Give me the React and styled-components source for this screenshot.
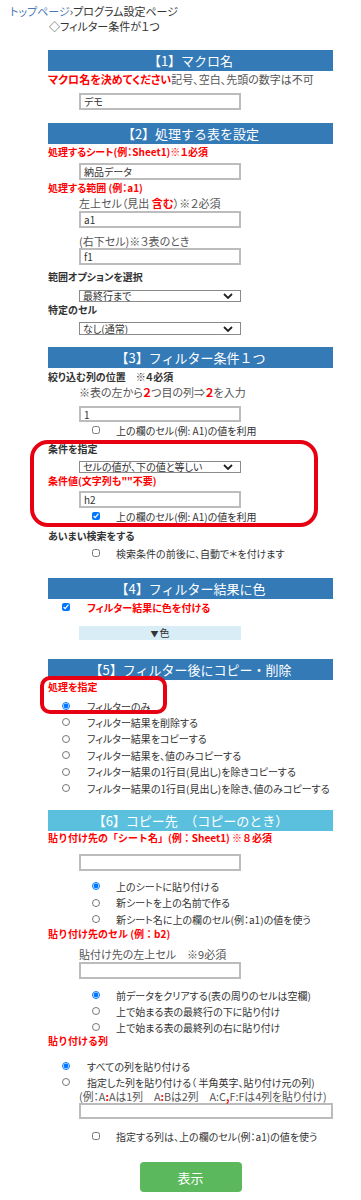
import React from "react";
import styled, { createGlobalStyle } from "styled-components";

const GlobalStyle = createGlobalStyle`
  body {
    margin: 0;
    background: #fff;
    color: #333;
    font-family: "Noto Sans CJK JP", "Noto Sans", sans-serif;
    font-feature-settings: "palt" 1;
  }
`;

const Breadcrumb = styled.div`
  padding: 4px 0 0 10px;
  font-size: 11px;
  line-height: 15px;
  color: #333;

  & a {
    color: #4a78b5;
    text-decoration: none;
  }
`;

const SubTitle = styled.div`
  padding-left: 49px;
  font-size: 11px;
  line-height: 14px;
  color: #333;
`;

const Content = styled.div`
  margin: 17px 0 0 48px;
  width: 285px;
`;

const SectionTitle = styled.div`
  margin-top: ${(p) => p.$mt || 0}px;
  height: 21px;
  line-height: 21px;
  background: ${(p) => (p.$light ? "#5bc0de" : "#337ab7")};
  color: #fff;
  font-size: 13px;
  text-align: center;
  font-feature-settings: normal;
`;

const Lead = styled.div`
  line-height: 16px;
  font-size: 11px;
  color: #555;

  & b {
    color: #ff0000;
  }
`;

const RedLabel = styled.div`
  margin-top: ${(p) => p.$mt || 0}px;
  line-height: ${(p) => p.$lh || 16}px;
  font-size: 10px;
  font-weight: bold;
  color: #ff0000;
  white-space: nowrap;
  font-feature-settings: ${(p) => (p.$fixed ? "normal" : '"palt" 1')};
`;

const FieldLabel = styled.div`
  margin-top: ${(p) => p.$mt || 0}px;
  line-height: ${(p) => p.$lh || 16}px;
  font-size: 10px;
  font-weight: bold;
  color: #333;
`;

const Hint = styled.div`
  margin-top: ${(p) => p.$mt || 0}px;
  padding-left: 31px;
  line-height: ${(p) => p.$lh || 14}px;
  font-size: ${(p) => p.$size || 11}px;
  color: #555;
  white-space: nowrap;

  & em {
    font-style: normal;
    font-weight: bold;
    color: #ff0000;
  }
`;

const TextInput = styled.input`
  display: block;
  box-sizing: border-box;
  margin: ${(p) => p.$mt || 0}px 0 0 31px;
  width: ${(p) => (p.$wide ? 254 : 162)}px;
  height: ${(p) => p.$h || 17}px;
  padding: 0 3px;
  border: 2px solid #bcbcbc;
  font: inherit;
  font-size: 10px;
  color: #333;
  outline: none;
`;

const SelectWrap = styled.div`
  position: relative;
  margin: ${(p) => p.$mt || 0}px 0 0 31px;
  width: 162px;
  height: ${(p) => p.$h || 12}px;

  & svg {
    position: absolute;
    right: 8px;
    top: 50%;
    transform: translateY(-50%);
    pointer-events: none;
  }
`;

const Select = styled.select`
  appearance: none;
  display: block;
  box-sizing: border-box;
  width: 100%;
  height: 100%;
  margin: 0;
  padding: 0 0 0 3px;
  border: 1px solid #8a8a8a;
  border-radius: 0;
  background: #fff;
  font: inherit;
  font-size: 10px;
  line-height: 1;
  color: #333;
`;

const Choice = styled.label`
  display: flex;
  align-items: center;
  gap: ${(p) => (p.$indent === 14 ? 17 : 16)}px;
  margin-top: ${(p) => p.$mt || 0}px;
  height: ${(p) => p.$h || 16}px;
  padding-left: ${(p) => p.$indent || 44}px;
  font-size: 10px;
  color: ${(p) => (p.$red ? "#ff0000" : "#333")};
  font-weight: ${(p) => (p.$red ? "bold" : "normal")};
  white-space: nowrap;

  & input {
    flex: none;
    width: 8px;
    height: 8px;
    margin: 0;
  }
`;

const Annotated = styled.div`
  position: relative;

  &::after {
    content: "";
    position: absolute;
    top: ${(p) => p.$top}px;
    bottom: ${(p) => p.$bottom}px;
    left: ${(p) => p.$left}px;
    right: ${(p) => p.$right}px;
    border: 4px solid #e60012;
    border-radius: ${(p) => p.$radius}px;
    pointer-events: none;
  }
`;

const ColorBar = styled.div`
  margin: 11px 0 0 31px;
  width: 162px;
  height: 14px;
  line-height: 14px;
  background: #d9edf7;
  font-size: 10px;
  text-align: center;
  color: #333;

  & small {
    font-size: 8px;
    margin-right: 1px;
  }
`;

const SubmitButton = styled.button`
  display: block;
  margin: 18px auto 0;
  width: 102px;
  height: 30px;
  border: none;
  border-radius: 4px;
  background: #5cb85c;
  color: #fff;
  font: inherit;
  font-size: 13px;
  cursor: pointer;
`;

const Chevron = () => (
  <svg width="10" height="6" viewBox="0 0 10 6">
    <polyline points="1,1 5,5 9,1" fill="none" stroke="#222" strokeWidth="1.8" />
  </svg>
);

const Dropdown = ({ mt, h, value }) => (
  <SelectWrap $mt={mt} $h={h}>
    <Select defaultValue={value}>
      <option>{value}</option>
    </Select>
    <Chevron />
  </SelectWrap>
);

export default function App() {
  return (
    <>
      <GlobalStyle />
      <Breadcrumb>
        <a href="#">トップページ</a>›プログラム設定ページ
      </Breadcrumb>
      <SubTitle>◇フィルター条件が１つ</SubTitle>

      <Content>
        <SectionTitle>【1】マクロ名</SectionTitle>
        <Lead>
          <b>マクロ名を決めてください</b>記号、空白、先頭の数字は不可
        </Lead>
        <TextInput $mt={6} defaultValue="デモ" />

        <SectionTitle $mt={13}>【2】処理する表を設定</SectionTitle>
        <RedLabel>処理するシート(例：Sheet1)※１必須</RedLabel>
        <TextInput $mt={3} defaultValue="納品データ" />
        <RedLabel>処理する範囲 (例：a1)</RedLabel>
        <Hint>
          左上セル（見出 <em>含む</em>）※２必須
        </Hint>
        <TextInput $mt={1} defaultValue="a1" />
        <Hint $mt={6}>(右下セル)※３表のとき</Hint>
        <TextInput defaultValue="f1" />
        <FieldLabel $mt={4}>範囲オプションを選択</FieldLabel>
        <Dropdown mt={5} value="最終行まで" />
        <FieldLabel>特定のセル</FieldLabel>
        <Dropdown mt={4} h={13} value="なし(通常)" />

        <SectionTitle $mt={12}>【3】フィルター条件１つ</SectionTitle>
        <FieldLabel $lh={18}>絞り込む列の位置　※４必須</FieldLabel>
        <Hint $lh={12}>
          ※表の左から<em>２</em>つ目の列⇒<em>２</em>を入力
        </Hint>
        <TextInput $mt={8} $h={16} defaultValue="1" />
        <Choice>
          <input type="checkbox" />
          上の欄のセル(例: A1)の値を利用
        </Choice>
        <Annotated $top={-1} $bottom={-3} $left={-18} $right={15} $radius={18}>
          <FieldLabel $mt={3}>条件を指定</FieldLabel>
          <Dropdown mt={4} value="セルの値が、下の値と等しい" />
          <RedLabel>条件値(文字列も""不要)</RedLabel>
          <TextInput $mt={2} defaultValue="h2" />
          <Choice>
            <input type="checkbox" defaultChecked />
            上の欄のセル(例: A1)の値を利用
          </Choice>
        </Annotated>
        <FieldLabel $mt={4}>あいまい検索をする</FieldLabel>
        <Choice $mt={1}>
          <input type="checkbox" />
          検索条件の前後に、自動で＊を付けます
        </Choice>

        <SectionTitle $mt={17}>【4】フィルター結果に色</SectionTitle>
        <Choice $indent={14} $red>
          <input type="checkbox" defaultChecked />
          フィルター結果に色を付ける
        </Choice>
        <ColorBar>
          <small>▼</small>色
        </ColorBar>

        <SectionTitle $mt={19}>【5】フィルター後にコピー・削除</SectionTitle>
        <Annotated $top={-4} $bottom={0} $left={-8} $right={166} $radius={10}>
          <RedLabel $lh={14}>処理を指定</RedLabel>
          <Choice $indent={14} $mt={4}>
            <input type="radio" name="mode" defaultChecked />
            フィルターのみ
          </Choice>
        </Annotated>
        <Choice $indent={14} $h={16.5}>
          <input type="radio" name="mode" />
          フィルター結果を削除する
        </Choice>
        <Choice $indent={14} $h={16.5}>
          <input type="radio" name="mode" />
          フィルター結果をコピーする
        </Choice>
        <Choice $indent={14} $h={16.5}>
          <input type="radio" name="mode" />
          フィルター結果を、値のみコピーする
        </Choice>
        <Choice $indent={14} $h={16.5}>
          <input type="radio" name="mode" />
          フィルター結果の1行目(見出し)を除きコピーする
        </Choice>
        <Choice $indent={14} $h={16.5}>
          <input type="radio" name="mode" />
          フィルター結果の1行目(見出し)を除き、値のみコピーする
        </Choice>

        <SectionTitle $mt={13.5} $light>
          【6】コピー先　（コピーのとき）
        </SectionTitle>
        <RedLabel $lh={14} $fixed>
          貼り付け先の「シート名」(例：Sheet1) ※８必須
        </RedLabel>
        <TextInput $mt={9} />
        <Choice $mt={7} $h={16.5}>
          <input type="radio" name="sheet" defaultChecked />
          上のシートに貼り付ける
        </Choice>
        <Choice $h={16.5}>
          <input type="radio" name="sheet" />
          新シートを上の名前で作る
        </Choice>
        <Choice $h={16.5}>
          <input type="radio" name="sheet" />
          新シート名に上の欄のセル(例：a1)の値を使う
        </Choice>
        <RedLabel $lh={12} $fixed>
          貼り付け先のセル (例：b2)
        </RedLabel>
        <Hint $mt={7}>貼付け先の左上セル　※9必須</Hint>
        <TextInput $mt={1.5} />
        <Choice $mt={8}>
          <input type="radio" name="place" defaultChecked />
          前データをクリアする(表の周りのセルは空欄)
        </Choice>
        <Choice>
          <input type="radio" name="place" />
          上で始まる表の最終行の下に貼り付け
        </Choice>
        <Choice>
          <input type="radio" name="place" />
          上で始まる表の最終列の右に貼り付け
        </Choice>
        <RedLabel $lh={12} $fixed>
          貼り付ける列
        </RedLabel>
        <Choice $indent={14} $mt={11}>
          <input type="radio" name="cols" defaultChecked />
          すべての列を貼り付ける
        </Choice>
        <Choice $indent={14}>
          <input type="radio" name="cols" />
          指定した列を貼り付ける（ 半角英字、貼り付け元の列)
        </Choice>
        <Hint $lh={12} $size={10.8}>
          (例：A<em>:</em>Aは1列　A<em>:</em>Bは2列　A:C<em>,</em>F:Fは4列を貼り付け)
        </Hint>
        <TextInput $mt={1} $h={16} $wide />
        <Choice $mt={9}>
          <input type="checkbox" />
          指定する列は、上の欄のセル(例：a1)の値を使う
        </Choice>

        <SubmitButton type="button">表示</SubmitButton>
      </Content>
    </>
  );
}
